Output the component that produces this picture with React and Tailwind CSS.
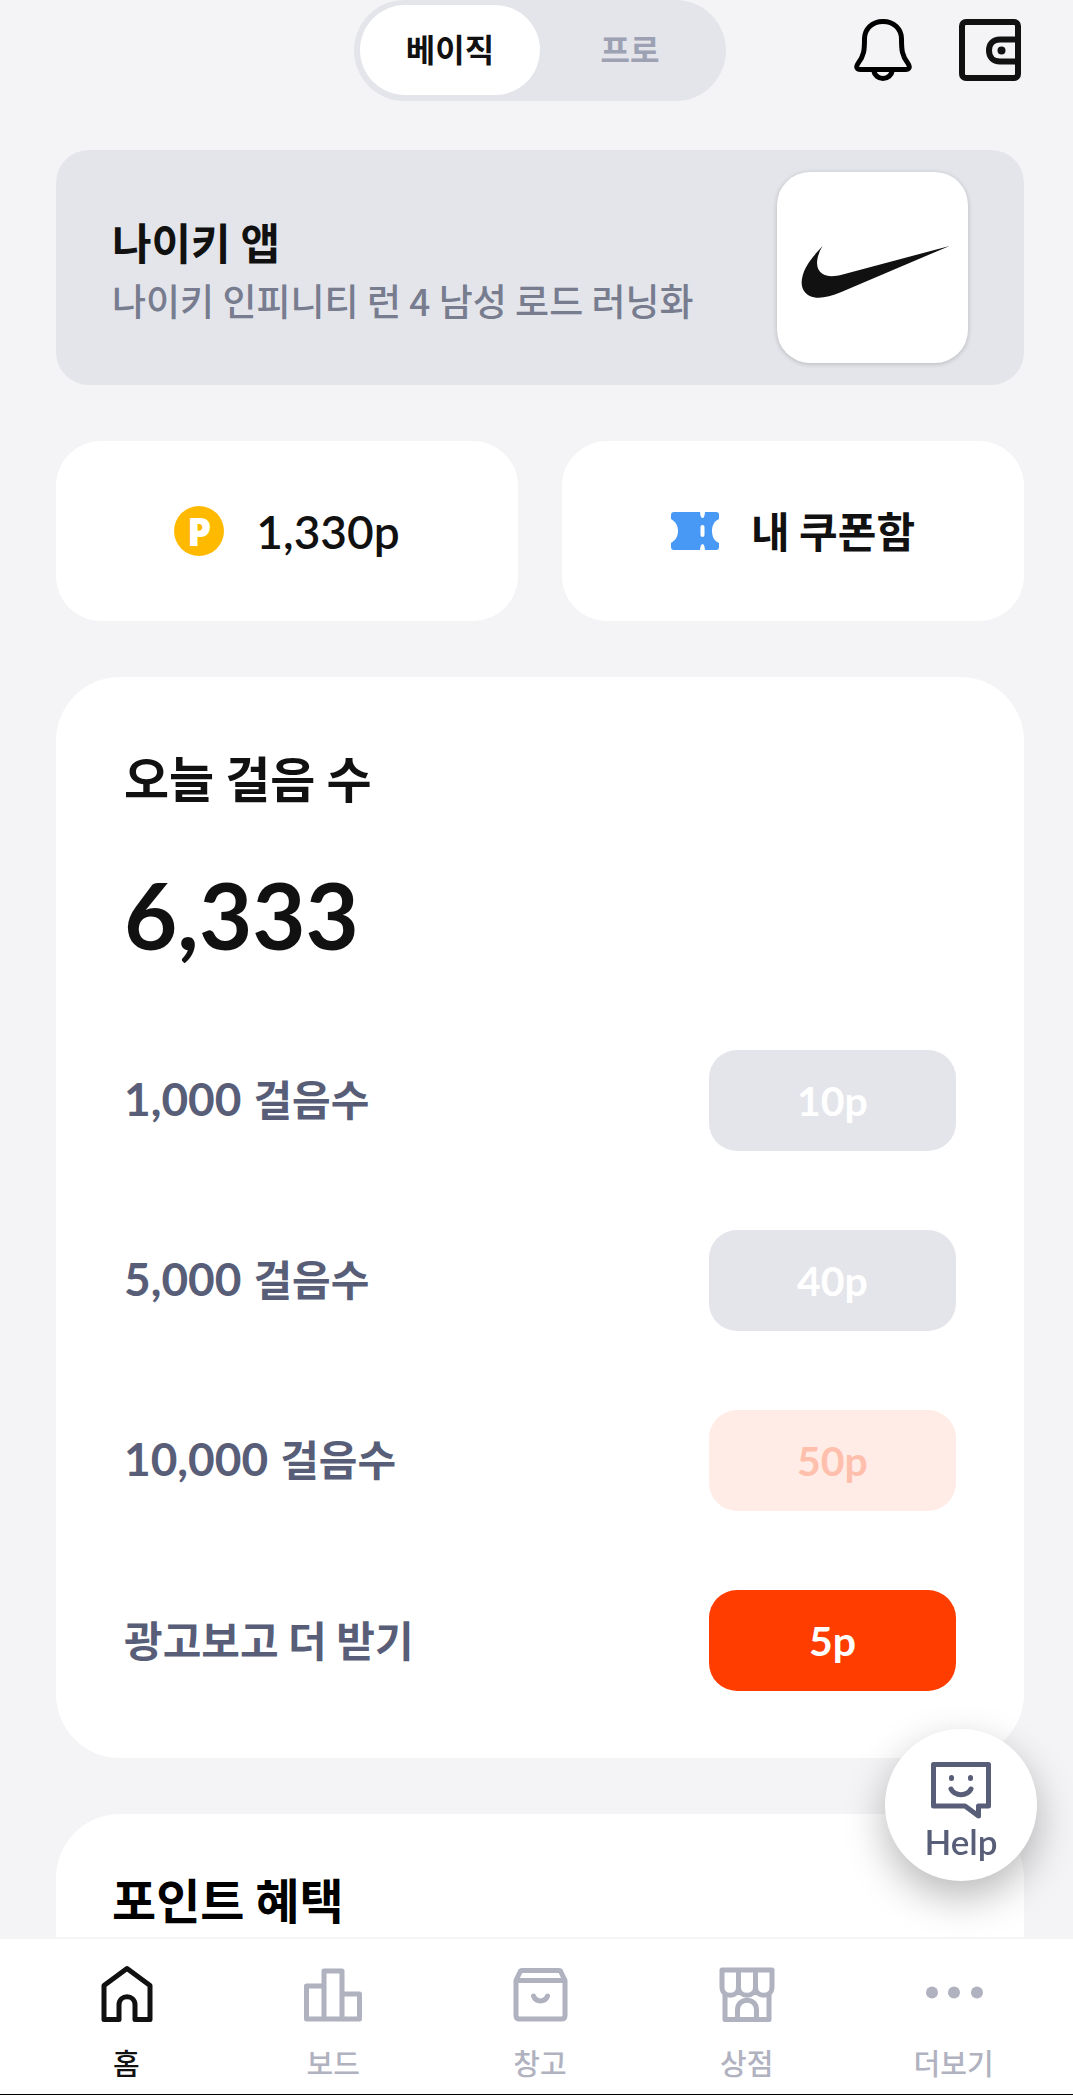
// useState keeps the selected mode (basic / pro) and the active tab
import React, { useState } from 'react';

/**
 * ICONS
 * All icons inherit their colour from the surrounding text.
 */
const BellIcon = () => (
  <svg className="size-[66px]" viewBox="0 0 66 66" fill="none" stroke="currentColor" strokeWidth="5" strokeLinejoin="round" aria-hidden="true">
    <path d="M33 3.500C22 3.500 14.500 11 14.500 21C14.500 32 14 38 8 45.500C5.500 49.500 7 51.500 10.500 51.500H55.500C59 51.500 60.500 49.500 58 45.500C52 38 51.500 32 51.500 21C51.500 11 44 3.500 33 3.500Z" />
    <path d="M23.500 52C24.500 57.500 28.500 60.500 33 60.500C37.500 60.500 41.500 57.500 42.500 52" />
  </svg>
);

const WalletIcon = () => (
  <svg className="size-[66px]" viewBox="0 0 66 66" fill="none" stroke="currentColor" strokeWidth="6" strokeLinejoin="round" aria-hidden="true">
    <rect x="4" y="4" width="56" height="56" rx="4" />
    <path d="M60 21.500H42C35 21.500 31 26 31 32.500C31 39 35 43.500 42 43.500H60" />
    <circle cx="43.500" cy="32.500" r="4" fill="currentColor" stroke="none" />
  </svg>
);

const SwooshIcon = () => (
  <svg className="size-full" viewBox="-4 -4.2 31 31" fill="currentColor" aria-hidden="true">
    <path d="M24 7.800L6.442 15.276c-1.456.616-2.679.925-3.668.925-1.120 0-1.933-.392-2.437-1.177-.317-.504-.410-1.143-.280-1.918.130-.775.476-1.600 1.036-2.478.467-.710 1.232-1.643 2.297-2.800a6.122 6.122 0 0 0-.784 1.848c-.280 1.195-.028 2.072.756 2.632.373.261.886.392 1.540.392.522 0 1.110-.084 1.764-.252L24 7.800z" />
  </svg>
);

const CouponIcon = () => (
  <svg className="h-[38px] w-12" viewBox="0 0 48 38" aria-hidden="true">
    <path
      fill="#4799f5"
      d="M3 0H29Q29.500 6 31.500 6Q33.500 6 34 0H45Q48 0 48 3V7C43 9 41 14 41 19C41 24 43 29 48 31V35Q48 38 45 38H34Q33.500 32 31.500 32Q29.500 32 29 38H3Q0 38 0 35V31C5 28 7 24 7 19C7 14 5 10 0 7V3Q0 0 3 0Z"
    />
    <rect x="29.500" y="13" width="4" height="12" rx="2" fill="#fff" />
  </svg>
);

const HelpIcon = () => (
  <svg className="h-[57px] w-[60px]" viewBox="0 0 60 57" fill="none" stroke="currentColor" strokeWidth="5" strokeLinejoin="round" strokeLinecap="round" aria-hidden="true">
    <path d="M2.500 2.500H57.500V44H47.500V54L34 44H2.500Z" />
    <path d="M20.500 15.500V16.500M39.500 15.500V16.500" />
    <path d="M20 27C24 34.500 36 34.500 40 27" />
  </svg>
);

const HomeIcon = () => (
  <svg className="size-[60px]" viewBox="0 0 60 60" fill="none" stroke="currentColor" strokeWidth="5" strokeLinejoin="round" aria-hidden="true">
    <path d="M31 5.500L54 22.500V56.500H39V42C39 31 23 31 23 42V56.500H8V22.500Z" />
  </svg>
);

const BoardIcon = () => (
  <svg className="size-[60px]" viewBox="0 0 60 60" fill="none" stroke="currentColor" strokeWidth="5" strokeLinejoin="round" aria-hidden="true">
    <path d="M21 23H3.500V56H56.500V31H39" />
    <path d="M21 56V8H39V56" />
  </svg>
);

const StorageIcon = () => (
  <svg className="size-[60px]" viewBox="0 0 60 60" fill="none" stroke="currentColor" strokeWidth="5" strokeLinejoin="round" strokeLinecap="round" aria-hidden="true">
    <path d="M6 17.500L10.500 8Q11 7.500 12.500 7.500H48.500Q50 7.500 50.500 8L55 17.500V52.500Q55 56 51.500 56H9.500Q6 56 6 52.500Z" />
    <path d="M6.500 17.500H54.500" />
    <path d="M23.500 33C26 39.500 35 39.500 37.500 33" />
  </svg>
);

const StoreIcon = () => (
  <svg className="size-[60px]" viewBox="0 0 60 60" fill="none" stroke="currentColor" strokeWidth="5" strokeLinejoin="round" aria-hidden="true">
    <path d="M5 7H55V24C55 35 38.500 35 38.500 24C38.500 35 21.500 35 21.500 24C21.500 35 5 35 5 24Z" />
    <path d="M21.500 7V24M38.500 7V24" />
    <path d="M8 31V56.500H52V31" />
    <path d="M20.500 56.500V47C20.500 34 39.500 34 39.500 47V56.500" />
  </svg>
);

const MoreIcon = () => (
  <svg className="size-[60px]" viewBox="0 0 60 60" fill="currentColor" aria-hidden="true">
    <circle cx="8" cy="29.500" r="6" />
    <circle cx="30" cy="29.500" r="6" />
    <circle cx="53" cy="29.500" r="6" />
  </svg>
);

// Step goals with their reward and the look of the reward button
const GOALS = [
  { count: '1,000', label: '걸음수', reward: '10p', style: 'bg-[#e4e5ea] text-white' },
  { count: '5,000', label: '걸음수', reward: '40p', style: 'bg-[#e4e5ea] text-white' },
  { count: '10,000', label: '걸음수', reward: '50p', style: 'bg-[#ffece6] text-[#ffbfad]' },
  { count: null, label: '광고보고 더 받기', reward: '5p', style: 'bg-[#ff3d00] text-white' },
];

// Bottom navigation
const TABS = [
  { id: 'home', label: '홈', Icon: HomeIcon },
  { id: 'board', label: '보드', Icon: BoardIcon },
  { id: 'storage', label: '창고', Icon: StorageIcon },
  { id: 'store', label: '상점', Icon: StoreIcon },
  { id: 'more', label: '더보기', Icon: MoreIcon },
];

const MODES = [
  { id: 'basic', label: '베이직' },
  { id: 'pro', label: '프로' },
];

/**
 * Header: mode switch in the middle, notifications and wallet on the right
 */
const Header = () => {
  const [mode, setMode] = useState('basic');

  return (
    <header className="grid grid-cols-[1fr_auto_1fr] items-center">
      <div className="col-start-2 flex rounded-full bg-[#e4e5ea] px-1.5 pt-[5px] pb-1.5">
        {MODES.map(({ id, label }) => (
          <button
            key={id}
            type="button"
            aria-pressed={mode === id}
            onClick={() => setMode(id)}
            className={`h-[90px] w-[180px] rounded-full pb-1 text-[32px] font-bold ${
              mode === id ? 'bg-white text-[#111]' : 'text-[#9da1b4]'
            }`}
          >
            {label}
          </button>
        ))}
      </div>
      <div className="flex justify-end gap-[42px]">
        <button type="button" aria-label="알림" className="text-black">
          <BellIcon />
        </button>
        <button type="button" aria-label="지갑">
          <WalletIcon />
        </button>
      </div>
    </header>
  );
};

/**
 * Today's steps: total and the list of goals
 */
const StepsCard = () => (
  <section className="rounded-[64px] bg-white px-[68px] pt-[68px] pb-[67px]">
    <h2 className="text-[49px] leading-[64px] font-bold">오늘 걸음 수</h2>
    <p className="mt-11 font-[Lato,sans-serif] text-[92px] leading-[124px] font-bold">6,333</p>
    <ul className="mt-[73px] flex flex-col gap-[79px]">
      {GOALS.map(({ count, label, reward, style }) => (
        <li key={reward} className="flex items-center justify-between">
          <p className="flex items-baseline gap-3 pb-1 text-[42px] leading-[60px] font-bold text-[#585e78]">
            {count && <span className="font-[Lato,sans-serif] text-[46px]">{count}</span>}
            <span>{label}</span>
          </p>
          <button
            type="button"
            className={`h-[101px] w-[247px] rounded-[28px] font-[Lato,sans-serif] text-[41px] font-bold ${style}`}
          >
            {reward}
          </button>
        </li>
      ))}
    </ul>
  </section>
);

const App = () => {
  const [tab, setTab] = useState('home');

  return (
    <div className="h-screen overflow-hidden bg-[#f4f4f6] font-['Noto_Sans_CJK_KR',sans-serif] text-[#111]">
      <main className="flex flex-col gap-14 pr-[49px] pl-14">
        <div className="flex flex-col gap-[49px]">
          <Header />

          {/* Sponsored banner */}
          <a href="#nike" className="flex items-center justify-between rounded-[33px] bg-[#e4e5ea] px-14 py-[22px]">
            <div>
              <p className="text-[43px] leading-[64px] font-bold">나이키 앱</p>
              <p className="text-[37px] leading-[54px] font-medium text-[#777c8f]">
                나이키 인피니티 런 4 남성 로드 러닝화
              </p>
            </div>
            <div className="size-[191px] shrink-0 rounded-[33px] bg-white shadow-[0_1px_5px_rgba(0,0,0,0.2)]">
              <SwooshIcon />
            </div>
          </a>
        </div>

        {/* Points and coupons */}
        <div className="grid grid-cols-2 gap-11">
          <a href="#points" className="flex h-[180px] items-center justify-center gap-8 rounded-[45px] bg-white">
            <span className="flex size-[50px] items-center justify-center rounded-full bg-[#ffba00] font-['Open_Sans',sans-serif] text-[38px] leading-none font-extrabold text-white">
              P
            </span>
            <span className="font-[Lato,sans-serif] text-[46px] font-semibold">1,330p</span>
          </a>
          <a href="#coupons" className="flex h-[180px] items-center justify-center gap-8 rounded-[45px] bg-white">
            <CouponIcon />
            <span className="pb-1 text-[42px] font-bold">내 쿠폰함</span>
          </a>
        </div>

        <StepsCard />

        {/* Point benefits, continues under the navigation */}
        <section className="h-[400px] rounded-[64px] bg-white px-14 pt-12">
          <h2 className="text-[48px] leading-[72px] font-bold text-black">포인트 혜택</h2>
        </section>
      </main>

      {/* Floating help button */}
      <button
        type="button"
        className="fixed right-9 bottom-[214px] flex size-[152px] flex-col items-center rounded-full bg-white pt-[33px] text-[#585e78] shadow-[0_16px_40px_rgba(0,0,0,0.28)]"
      >
        <HelpIcon />
        <span className="font-[Lato,sans-serif] text-[35px] leading-[44px] font-semibold">Help</span>
      </button>

      {/* Bottom navigation */}
      <nav className="fixed inset-x-0 bottom-0 grid grid-cols-5 border-t-2 border-b border-t-[#f4f4f6] border-b-black bg-white pt-6 pr-4 pb-2.5 pl-[23px]">
        {TABS.map(({ id, label, Icon }) => (
          <button
            key={id}
            type="button"
            onClick={() => setTab(id)}
            aria-current={tab === id ? 'page' : undefined}
            className={`flex flex-col items-center gap-[17px] text-[29px] leading-[44px] font-medium ${
              tab === id ? 'text-[#111]' : 'text-[#b0b2c0]'
            }`}
          >
            <Icon />
            {label}
          </button>
        ))}
      </nav>
    </div>
  );
};

export default App;
